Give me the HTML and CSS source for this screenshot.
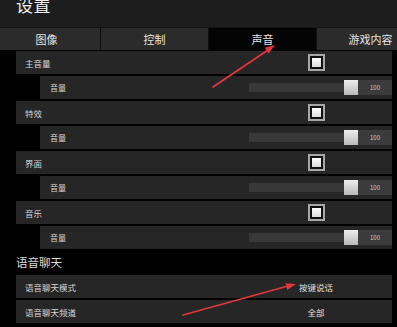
FILE: index.html
```html
<!doctype html>
<html>
<head>
<title>设置</title>
<meta charset="utf-8">
<meta name="viewport" content="width=device-width, initial-scale=1.0">
<link rel="stylesheet" href="styles.css">
</head>
<body>
<div id="container">

    <!-- Title -->
    <header class="topbar">
        <h1>设置</h1>
    </header>

    <!-- Tabs -->
    <nav class="tabs">
        <div class="tab">图像</div>
        <div class="tab">控制</div>
        <div class="tab active">声音</div>
        <div class="tab">游戏内容</div>
    </nav>

    <!-- Sound settings -->
    <section class="settings">
        <div class="row">
            <span class="label">主音量</span>
            <span class="control"><span class="check"><i></i></span></span>
        </div>
        <div class="row sub">
            <span class="label">音量</span>
            <div class="slider"><div class="track"></div><div class="thumb"></div><div class="value">100</div></div>
        </div>

        <div class="row">
            <span class="label">特效</span>
            <span class="control"><span class="check"><i></i></span></span>
        </div>
        <div class="row sub">
            <span class="label">音量</span>
            <div class="slider"><div class="track"></div><div class="thumb"></div><div class="value">100</div></div>
        </div>

        <div class="row">
            <span class="label">界面</span>
            <span class="control"><span class="check"><i></i></span></span>
        </div>
        <div class="row sub">
            <span class="label">音量</span>
            <div class="slider"><div class="track"></div><div class="thumb"></div><div class="value">100</div></div>
        </div>

        <div class="row">
            <span class="label">音乐</span>
            <span class="control"><span class="check"><i></i></span></span>
        </div>
        <div class="row sub">
            <span class="label">音量</span>
            <div class="slider"><div class="track"></div><div class="thumb"></div><div class="value">100</div></div>
        </div>

        <h2>语音聊天</h2>
        <div class="row">
            <span class="label">语音聊天模式</span>
            <span class="control">按键说话</span>
        </div>
        <div class="row">
            <span class="label">语音聊天频道</span>
            <span class="control">全部</span>
        </div>
    </section>

    <!-- Annotation arrows -->
    <svg class="marks" width="397" height="327" viewBox="0 0 397 327">
        <line x1="213" y1="87" x2="268" y2="50" stroke="#e2363a" stroke-width="1.8" stroke-linecap="round"/>
        <polygon points="275,45 268.7,53.5 264.7,47.7" fill="#e2363a"/>
        <line x1="183" y1="315" x2="288" y2="286" stroke="#e2363a" stroke-width="1.8" stroke-linecap="round"/>
        <polygon points="296,284 287.3,290 285.5,283.2" fill="#e2363a"/>
    </svg>
</div>
</body>
</html>
```

FILE: styles.css
```css
/*Simple CSS Reset*/
* {
    margin: 0;
    padding: 0;
    box-sizing: border-box;
}

body {
    background: #000;
    color: #d6d6d6;
    font-family: "Noto Sans CJK SC", "Noto Sans", sans-serif;
    overflow: hidden;
}
#container {
    position: relative;
    width: 397px;
    height: 327px;
    overflow: hidden;
}

/* title bar */
.topbar {
    height: 27px;
    background: #1d1d1d;
    padding-left: 16px;
    overflow: hidden;
}
.topbar h1 {
    font-size: 17px;
    line-height: 17px;
    font-weight: normal;
    color: #f2f2f2;
    margin-top: -4px;
    letter-spacing: 0.5px;
}

/* tabs */
.tabs {
    display: grid;
    grid-template-columns: repeat(4, 107px);
    column-gap: 1px;
    margin-left: -7px;
    height: 23px;
    background: #101010;
    border-top: 1px solid #151515;
}
.tab {
    background: #2b2b2b;
    font-size: 11px;
    line-height: 22px;
    text-align: center;
    color: #e4e4e4;
}
.tab.active {
    background: #040404;
}

/* rows */
.settings {
    padding-top: 1px;
}
.row {
    display: flex;
    align-items: center;
    height: 23px;
    margin: 0 5px 2px 16px;
    background: #262626;
    font-size: 8.5px;
}
.row .label {
    flex: 1;
    padding-left: 9px;
}
.row .control {
    width: 80px;
    margin-right: 36px;
    text-align: center;
    display: flex;
    justify-content: center;
    align-items: center;
    color: #e0e0e0;
}
.row.sub {
    margin-left: 40px;
    font-size: 8px;
}
.row.sub .label {
    padding-left: 10px;
}

/* checkbox */
.check {
    display: block;
    width: 17px;
    height: 17px;
    border: 2px solid #a8a8a8;
    padding: 2px;
    background: #111;
}
.check i {
    display: block;
    width: 9px;
    height: 9px;
    background: linear-gradient(#ffffff, #dcdcdc);
}

/* slider */
.slider {
    display: flex;
    align-items: center;
    height: 15px;
}
.track {
    width: 95px;
    height: 9px;
    background: #383838;
}
.thumb {
    width: 14px;
    height: 15px;
    background: linear-gradient(#ededed, #b9b9b9);
}
.value {
    width: 34px;
    height: 15px;
    background: #3b3b3b;
    font-size: 6px;
    line-height: 15px;
    padding-left: 12px;
    color: #cfcfcf;
}

h2 {
    height: 24px;
    line-height: 24px;
    padding-left: 16px;
    font-size: 11.5px;
    font-weight: normal;
    color: #dcdcdc;
    margin-top: -1px;
    margin-bottom: 1px;
}

/* annotation layer */
.marks {
    position: absolute;
    left: 0;
    top: 0;
}
```
